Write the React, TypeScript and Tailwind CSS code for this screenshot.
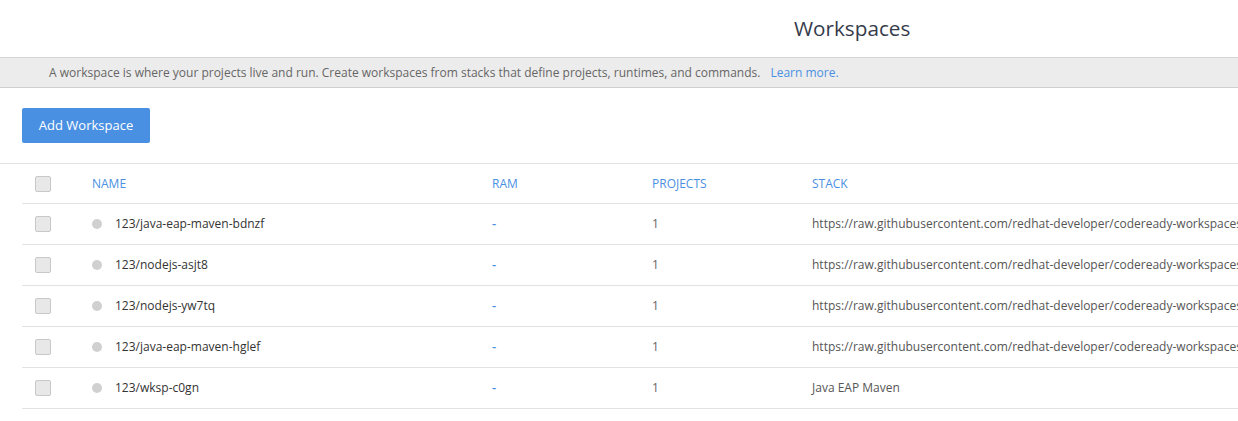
import React from "react";

const rows = [
  { name: "123/java-eap-maven-bdnzf", stack: "https://raw.githubusercontent.com/redhat-developer/codeready-workspaces/master/dependencies/che-devfile-registry/devfiles/java-eap-maven/devfile.yaml" },
  { name: "123/nodejs-asjt8", stack: "https://raw.githubusercontent.com/redhat-developer/codeready-workspaces/master/dependencies/che-devfile-registry/devfiles/nodejs/devfile.yaml" },
  { name: "123/nodejs-yw7tq", stack: "https://raw.githubusercontent.com/redhat-developer/codeready-workspaces/master/dependencies/che-devfile-registry/devfiles/nodejs/devfile.yaml" },
  { name: "123/java-eap-maven-hglef", stack: "https://raw.githubusercontent.com/redhat-developer/codeready-workspaces/master/dependencies/che-devfile-registry/devfiles/java-eap-maven/devfile.yaml" },
  { name: "123/wksp-c0gn", stack: "Java EAP Maven" },
];

function Checkbox() {
  return <div className="w-4 h-4 rounded-[2px] border border-[#c8c8c8] bg-[#e8e8e8]" />;
}

export default function App() {
  return (
    <div className="w-full overflow-hidden bg-white" style={{ fontFamily: '"Open Sans", "Noto Sans", sans-serif' }}>
      <div className="h-[58px] flex items-center pl-[794px] border-b border-[#d4d4d4]">
        <h1 className="text-[20.7px] leading-none text-[#353b4b] whitespace-nowrap">Workspaces</h1>
      </div>
      <div className="h-[30px] flex items-center bg-[#ececec] border-b border-[#cfcfcf] pl-[49px] text-[12px] whitespace-nowrap">
        <span className="text-[#666666]">A workspace is where your projects live and run. Create workspaces from stacks that define projects, runtimes, and commands.</span>
        <span className="ml-[10px] text-[#4a90e2]">Learn more.</span>
      </div>
      <div className="pt-[20px] pl-[22px] pb-[20px]">
        <button className="h-[35px] w-[128px] rounded-[2px] bg-[#4a90e2] text-white text-[13px]">Add Workspace</button>
      </div>
      <div className="border-t border-[#e2e2e2]">
        <div className="ml-[22px] w-[1600px]">
          <div className="grid grid-cols-[70px_400px_160px_160px_1fr] h-[40px] items-center border-b border-[#e2e2e2] text-[12px] text-[#4a90e2]">
            <div className="pl-[13px]"><Checkbox /></div>
            <div>NAME</div>
            <div>RAM</div>
            <div>PROJECTS</div>
            <div>STACK</div>
          </div>
          {rows.map((r) => (
            <div key={r.name} className="grid grid-cols-[70px_400px_160px_160px_1fr] h-[41px] items-center border-b border-[#e2e2e2]">
              <div className="pl-[13px]"><Checkbox /></div>
              <div className="flex items-center">
                <span className="w-[10px] h-[10px] rounded-full bg-[#d0d0d0]" />
                <span className="ml-[13px] text-[12px] text-[#333333]">{r.name}</span>
              </div>
              <div className="text-[13px] font-semibold text-[#4a90e2]">-</div>
              <div className="text-[12px] text-[#666666]">1</div>
              <div className="text-[12px] text-[#555555] whitespace-nowrap">{r.stack}</div>
            </div>
          ))}
        </div>
      </div>
    </div>
  );
}
